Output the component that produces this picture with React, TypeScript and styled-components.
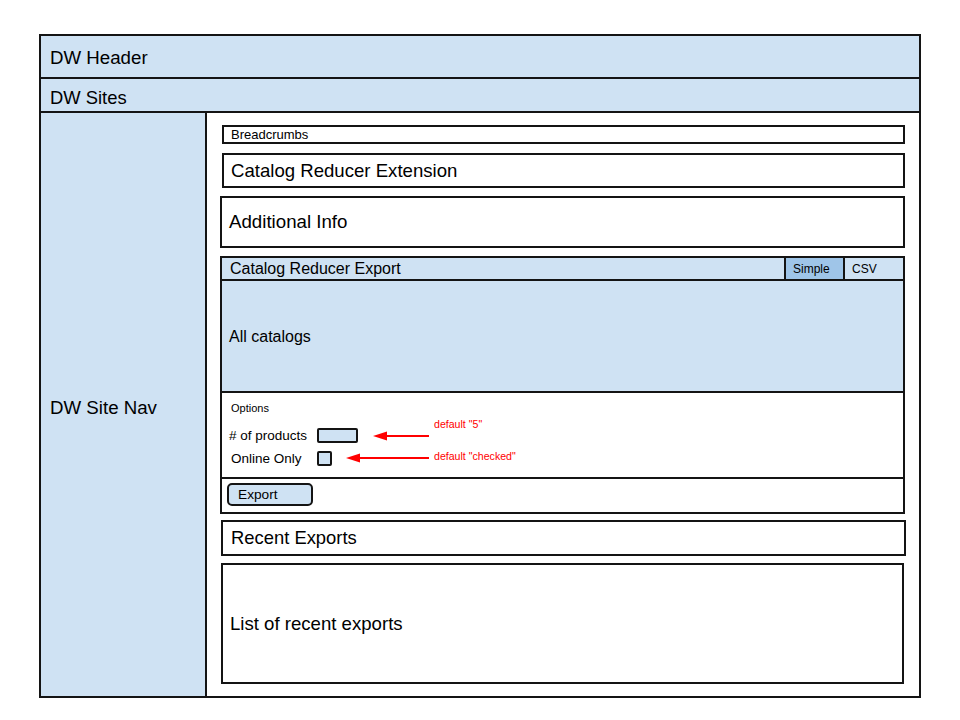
import React from "react";
import styled, { createGlobalStyle } from "styled-components";

const Global = createGlobalStyle`
  html, body { margin: 0; padding: 0; background: #ffffff; }
  body { font-family: "Liberation Sans", Arial, sans-serif; color: #000; }
`;

const BLUE = "#cfe2f3";
const BLUE_DARK = "#9fc5e8";
const LINE = "#141414";

const Frame = styled.div`
  box-sizing: border-box;
  margin: 34px 0 0 39px;
  width: 882px;
  height: 664px;
  border: 2px solid ${LINE};
  display: flex;
  flex-direction: column;
`;

const Bar = styled.div<{ $h: number; $size: number; $pt: number }>`
  box-sizing: border-box;
  height: ${(p) => p.$h}px;
  flex: none;
  background: ${BLUE};
  border-bottom: 2px solid ${LINE};
  display: flex;
  align-items: center;
  padding-left: 9px;
  padding-top: ${(p) => p.$pt}px;
  font-size: ${(p) => p.$size}px;
`;

const Body = styled.div`
  flex: 1;
  display: flex;
  min-height: 0;
`;

const Nav = styled.div`
  box-sizing: border-box;
  width: 166px;
  flex: none;
  background: ${BLUE};
  border-right: 2px solid ${LINE};
  display: flex;
  align-items: center;
  padding-left: 9px;
  padding-top: 7px;
  font-size: 18.7px;
`;

const Content = styled.div`
  flex: 1;
  display: flex;
  flex-direction: column;
  padding: 12px 14px 0 13px;
`;

const Box = styled.div<{
  $h: number;
  $mt: number;
  $size: number;
  $pl: number;
  $ml?: number;
  $mr?: number;
}>`
  box-sizing: border-box;
  height: ${(p) => p.$h}px;
  margin: ${(p) => p.$mt}px ${(p) => p.$mr ?? 0}px 0 ${(p) => p.$ml ?? 0}px;
  flex: none;
  border: 2px solid ${LINE};
  display: flex;
  align-items: center;
  padding-left: ${(p) => p.$pl}px;
  font-size: ${(p) => p.$size}px;
  background: #fff;
`;

const Panel = styled.div`
  box-sizing: border-box;
  height: 258px;
  margin-top: 8px;
  flex: none;
  border: 2px solid ${LINE};
  display: flex;
  flex-direction: column;
`;

const PanelHead = styled.div`
  box-sizing: border-box;
  height: 23px;
  flex: none;
  background: ${BLUE};
  border-bottom: 2px solid ${LINE};
  display: flex;
  align-items: stretch;
`;

const PanelTitle = styled.div`
  flex: 1;
  display: flex;
  align-items: center;
  padding-left: 8px;
  font-size: 16px;
`;

const Tab = styled.div<{ $active?: boolean; $w: number }>`
  box-sizing: border-box;
  width: ${(p) => p.$w}px;
  border-left: 2px solid ${LINE};
  background: ${(p) => (p.$active ? BLUE_DARK : BLUE)};
  display: flex;
  align-items: center;
  padding-left: 7px;
  font-size: 12px;
`;

const Catalogs = styled.div`
  box-sizing: border-box;
  height: 112px;
  flex: none;
  background: ${BLUE};
  border-bottom: 2px solid ${LINE};
  display: flex;
  align-items: center;
  padding-left: 7px;
  padding-top: 2px;
  font-size: 16px;
`;

const Options = styled.div`
  box-sizing: border-box;
  height: 86px;
  flex: none;
  border-bottom: 2px solid ${LINE};
  padding: 9px 0 0 7px;
  display: flex;
  flex-direction: column;
`;

const OptionsTitle = styled.div`
  font-size: 11px;
  height: 13px;
  line-height: 13px;
  margin: 0 0 13px 2px;
`;

const OptRow = styled.div<{ $mb: number }>`
  display: flex;
  align-items: center;
  height: 15px;
  margin-bottom: ${(p) => p.$mb}px;
`;

const OptLabel = styled.div<{ $pl: number }>`
  width: 88px;
  padding-left: ${(p) => p.$pl}px;
  box-sizing: border-box;
  font-size: 13.5px;
  flex: none;
  white-space: nowrap;
`;

const TextInput = styled.div`
  box-sizing: border-box;
  width: 41px;
  height: 15px;
  border: 2px solid ${LINE};
  border-radius: 2px;
  background: ${BLUE};
  flex: none;
`;

const Check = styled.div`
  box-sizing: border-box;
  width: 15px;
  height: 15px;
  border: 2px solid ${LINE};
  border-radius: 2px;
  background: ${BLUE};
  flex: none;
`;

const Note = styled.div<{ $gap: number; $dy: number }>`
  display: flex;
  align-items: center;
  margin-left: ${(p) => p.$gap}px;
  transform: translateY(${(p) => p.$dy}px);
`;

const NoteText = styled.span<{ $dy: number }>`
  font-size: 10.6px;
  color: #ff0000;
  margin-left: 5px;
  transform: translateY(${(p) => p.$dy}px);
  white-space: nowrap;
`;

const ActionRow = styled.div`
  flex: 1;
  display: flex;
  align-items: flex-start;
  padding: 4px 0 0 5px;
`;

const Button = styled.div`
  box-sizing: border-box;
  width: 86px;
  height: 23px;
  border: 2px solid ${LINE};
  border-radius: 5px;
  background: ${BLUE};
  display: flex;
  align-items: center;
  padding-left: 9px;
  font-size: 13.7px;
`;

const Arrow: React.FC<{ w: number }> = ({ w }) => (
  <svg width={w} height={12} viewBox={`0 0 ${w} 12`}>
    <line x1={10} y1={6} x2={w} y2={6} stroke="#ff0000" strokeWidth={2} />
    <polygon points={`0,6 14,1.5 14,10.5`} fill="#ff0000" />
  </svg>
);

export default function App() {
  return (
    <>
      <Global />
      <Frame>
        <Bar $h={43} $size={18.7} $pt={3}>
          DW Header
        </Bar>
        <Bar $h={34} $size={18.4} $pt={5}>
          DW Sites
        </Bar>
        <Body>
          <Nav>DW Site Nav</Nav>
          <Content>
            <Box $h={19} $mt={0} $size={13} $pl={7} $ml={2}>
              Breadcrumbs
            </Box>
            <Box $h={35} $mt={9} $size={18.6} $pl={7} $ml={2}>
              Catalog Reducer Extension
            </Box>
            <Box $h={52} $mt={8} $size={18.7} $pl={7}>
              Additional Info
            </Box>
            <Panel>
              <PanelHead>
                <PanelTitle>Catalog Reducer Export</PanelTitle>
                <Tab $active $w={59}>
                  Simple
                </Tab>
                <Tab $w={60}>CSV</Tab>
              </PanelHead>
              <Catalogs>All catalogs</Catalogs>
              <Options>
                <OptionsTitle>Options</OptionsTitle>
                <OptRow $mb={8}>
                  <OptLabel $pl={0}># of products</OptLabel>
                  <TextInput />
                  <Note $gap={15} $dy={0}>
                    <Arrow w={56} />
                    <NoteText $dy={-12}>default "5"</NoteText>
                  </Note>
                </OptRow>
                <OptRow $mb={0}>
                  <OptLabel $pl={2}>Online Only</OptLabel>
                  <Check />
                  <Note $gap={14} $dy={-1}>
                    <Arrow w={83} />
                    <NoteText $dy={-2}>default "checked"</NoteText>
                  </Note>
                </OptRow>
              </Options>
              <ActionRow>
                <Button>Export</Button>
              </ActionRow>
            </Panel>
            <Box $h={36} $mt={6} $size={18.4} $pl={8} $ml={1} $mr={-1}>
              Recent Exports
            </Box>
            <Box $h={121} $mt={7} $size={18.6} $pl={7} $ml={1} $mr={1}>
              List of recent exports
            </Box>
          </Content>
        </Body>
      </Frame>
    </>
  );
}
